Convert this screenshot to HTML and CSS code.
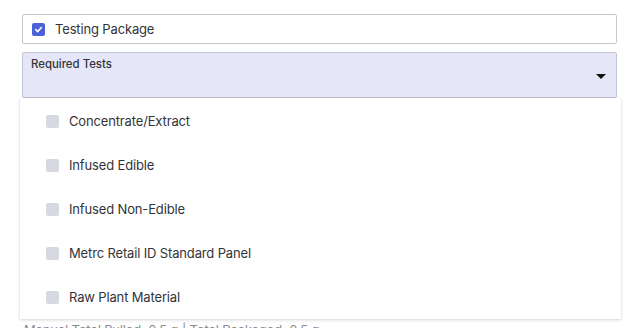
FILE: index.html
```html
<!DOCTYPE html>
<html>
<head>
<meta charset="utf-8">
<link rel="stylesheet" href="styles.css">
</head>
<body>
<div class="page">
  <label class="toggle-box">
    <span class="check checked">
      <svg width="9" height="9" viewBox="0 0 10 10"><path d="M2 5.2 L4.2 7.3 L8.2 2.8" fill="none" stroke="#fff" stroke-width="1.8" stroke-linecap="round" stroke-linejoin="round"/></svg>
    </span>
    <span class="toggle-text">Testing Package</span>
  </label>
  <div class="select-wrap">
    <div class="select">
      <span class="select-label">Required Tests</span>
      <span class="caret"></span>
    </div>
    <div class="menu">
      <div class="item"><span class="check"></span><span>Concentrate/Extract</span></div>
      <div class="item"><span class="check"></span><span>Infused Edible</span></div>
      <div class="item"><span class="check"></span><span>Infused Non-Edible</span></div>
      <div class="item"><span class="check"></span><span>Metrc Retail ID Standard Panel</span></div>
      <div class="item"><span class="check"></span><span>Raw Plant Material</span></div>
    </div>
  </div>
  <div class="footnote">Manual Total Pulled: 0.5 g | Total Packaged: 0.5 g</div>
</div>
</body>
</html>
```
FILE: styles.css
```css
* { box-sizing: border-box; }
html, body { margin: 0; padding: 0; background: #fff; }
body {
  font-family: Inter, "Noto Sans", "Liberation Sans", sans-serif;
  color: #333438;
  width: 644px;
  height: 328px;
  overflow: hidden;
}
.page {
  padding: 14px 27px 0 22px;
  display: flex;
  flex-direction: column;
}
.toggle-box {
  height: 30px;
  border: 1px solid #c6c8cf;
  border-radius: 2px;
  display: flex;
  align-items: center;
  padding-left: 9px;
  gap: 10px;
}
.check {
  width: 13px;
  height: 13px;
  border-radius: 2px;
  background: #d6d9e1;
  display: inline-flex;
  align-items: center;
  justify-content: center;
  flex: none;
}
.check.checked { background: #4a62d6; }
.toggle-text {
  font-size: 13px;
  letter-spacing: -0.15px;
}
.select-wrap {
  margin-top: 8px;
  position: relative;
}
.select {
  height: 46px;
  background: #e5e6f8;
  border: 1px solid #c3c5d4;
  border-radius: 2px;
  position: relative;
  padding: 4px 0 0 8px;
}
.select-label {
  font-size: 11.4px;
  font-weight: 500;
  display: block;
}
.caret {
  position: absolute;
  right: 10px;
  top: 21px;
  width: 0;
  height: 0;
  border-left: 5px solid transparent;
  border-right: 5px solid transparent;
  border-top: 5px solid #111;
}
.menu {
  position: absolute;
  left: -2px;
  right: -4px;
  top: 46px;
  background: #fff;
  box-shadow: 0 1px 3px rgba(0,0,0,0.16), 0 0 1px rgba(0,0,0,0.1);
  padding: 1px 0 0 0;
  z-index: 2;
  height: 221px;
}
.item {
  height: 44px;
  display: flex;
  align-items: center;
  padding-left: 26px;
  gap: 10px;
  font-size: 13px;
  letter-spacing: -0.15px;
}
.footnote {
  margin-top: 224px;
  padding-left: 2px;
  font-size: 13px;
  letter-spacing: -0.15px;
  color: #8a8c92;
  white-space: nowrap;
}
```
